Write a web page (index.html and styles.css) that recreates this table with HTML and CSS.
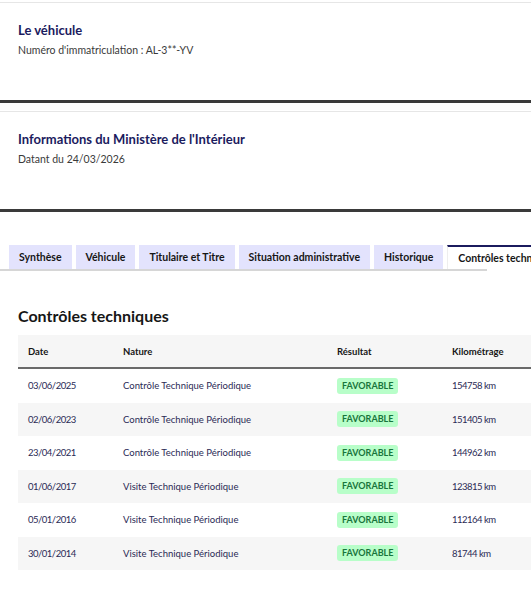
FILE: index.html
```html
<!DOCTYPE html>
<html lang="fr">
<head>
<meta charset="utf-8">
<title>Contrôles techniques</title>
<link rel="stylesheet" href="styles.css">
</head>
<body>
<div class="page">
  <div class="card first">
    <h2 class="card-title">Le véhicule</h2>
    <p class="card-text">Numéro d'immatriculation : AL-3**-YV</p>
  </div>
  <div class="card">
    <h2 class="card-title">Informations du Ministère de l'Intérieur</h2>
    <p class="card-text">Datant du 24/03/2026</p>
  </div>

  <div class="tabs">
    <div class="tab-list">
      <span class="tab">Synthèse</span>
      <span class="tab">Véhicule</span>
      <span class="tab">Titulaire et Titre</span>
      <span class="tab">Situation administrative</span>
      <span class="tab">Historique</span>
      <span class="tab active">Contrôles techniques</span>
    </div>
    <div class="tab-line"></div>
  </div>

  <h3 class="section-title">Contrôles techniques</h3>
  <div class="table-wrap">
    <table class="ct">
      <thead>
        <tr><th class="c-date">Date</th><th class="c-nat">Nature</th><th class="c-res">Résultat</th><th class="c-km">Kilométrage</th></tr>
      </thead>
      <tbody>
        <tr><td class="num">03/06/2025</td><td>Contrôle Technique Périodique</td><td><span class="badge">Favorable</span></td><td class="num">154758 km</td></tr>
        <tr><td class="num">02/06/2023</td><td>Contrôle Technique Périodique</td><td><span class="badge">Favorable</span></td><td class="num">151405 km</td></tr>
        <tr><td class="num">23/04/2021</td><td>Contrôle Technique Périodique</td><td><span class="badge">Favorable</span></td><td class="num">144962 km</td></tr>
        <tr><td class="num">01/06/2017</td><td>Visite Technique Périodique</td><td><span class="badge">Favorable</span></td><td class="num">123815 km</td></tr>
        <tr><td class="num">05/01/2016</td><td>Visite Technique Périodique</td><td><span class="badge">Favorable</span></td><td class="num">112164 km</td></tr>
        <tr><td class="num">30/01/2014</td><td>Visite Technique Périodique</td><td><span class="badge">Favorable</span></td><td class="num">81744 km</td></tr>
      </tbody>
    </table>
  </div>
</div>
</body>
</html>
```

FILE: styles.css
```css
html, body {
	margin: 0;
	padding: 0;
	background: #fff;
	overflow: hidden;
}
body {
	font-family: Lato, "Noto Sans", sans-serif;
	color: #161616;
}
.page {
	padding-top: 2px;
	width: 531px;
	overflow: hidden;
}
.card {
	border-top: 1px solid #e6e6e6;
	border-bottom: 3px solid #3a3a3a;
	padding: 17px 18px 0;
	height: 80px;
	margin-bottom: 8px;
}
.card-title {
	margin: 0;
	font-size: 13px;
	line-height: 20px;
	font-weight: 700;
	color: #1b1b5e;
}
.card-text {
	margin: 0;
	font-size: 10.5px;
	line-height: 20px;
	color: #3a3a3a;
}

.tabs {
	margin-top: 33px;
	overflow: hidden;
}
.tab-list {
	display: flex;
	gap: 4px;
	padding-left: 9px;
	white-space: nowrap;
}
.tab {
	flex: none;
	background: #e3e3fd;
	height: 24px;
	line-height: 24px;
	padding: 0 10px;
	font-size: 10.5px;
	font-weight: 700;
	color: #161616;
}
.tab.active {
	background: #fff;
	border-top: 2px solid #1b1b5e;
	height: 22px;
	line-height: 22px;
	border-left: 1px solid #eee;
}
.tab-line {
	width: 487px;
	height: 2px;
	background: #d6d6d6;
}

.section-title {
	margin: 34px 0 0 18px;
	font-size: 16px;
	line-height: 22px;
	font-weight: 700;
	color: #161616;
}
.table-wrap {
	margin: 8px 0 0 18px;
	overflow: hidden;
}
.ct {
	border-collapse: collapse;
	width: 560px;
	font-size: 9.5px;
	color: #2a2a55;
}
.ct th {
	background: #f6f6f6;
	text-align: left;
	font-weight: 700;
	color: #161616;
	height: 32px;
	padding: 0 10px;
	border-bottom: 2px solid #6a6a6a;
}
.ct td {
	height: 33.5px;
	padding: 0 10px;
	text-align: left;
}
.ct td.num {
	letter-spacing: -0.5px;
}
.ct tbody tr:nth-child(even) td {
	background: #f6f6f6;
}
.c-date { width: 75px; }
.c-nat { width: 194px; }
.c-res { width: 95px; }
.badge {
	display: inline-block;
	background: #b8fec9;
	color: #18753c;
	font-weight: 700;
	text-transform: uppercase;
	font-size: 9px;
	line-height: 16px;
	padding: 0 5px;
	border-radius: 3px;
}
```
